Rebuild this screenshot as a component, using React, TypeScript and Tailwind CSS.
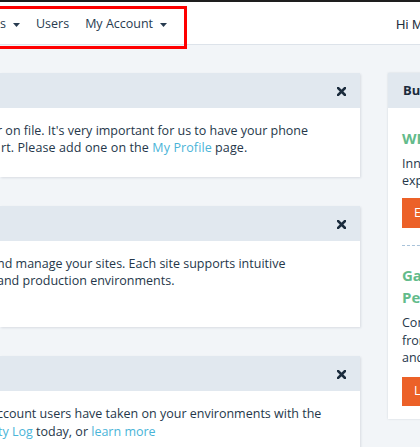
function Caret() {
  return (
    <svg width="7" height="4" viewBox="0 0 7 4" className="ml-[7px] mt-[1px]">
      <path d="M0 0 H7 L3.5 4 Z" fill="currentColor" />
    </svg>
  )
}

function CloseIcon() {
  return (
    <svg width="9" height="9" viewBox="0 0 9 9" className="mt-[1px] text-[#1b2c3d]">
      <path d="M1 1 L8 8 M8 1 L1 8" stroke="currentColor" strokeWidth="2.6" strokeLinecap="square" />
    </svg>
  )
}

function Panel({ children, bodyClass }: { children: React.ReactNode; bodyClass: string }) {
  return (
    <div className="bg-white shadow-[1px_1px_2px_rgba(40,60,80,0.12)]">
      <div className="flex h-[35px] items-center justify-end bg-[#e1e8ef] pr-[14px]">
        <CloseIcon />
      </div>
      <div className={bodyClass}>{children}</div>
    </div>
  )
}

const link = 'text-[#4ab4d8]'

export default function App() {
  return (
    <div
      className="relative h-[447px] w-[420px] overflow-hidden bg-[#f2f5f8] text-[12.5px] text-[#25374a]"
      style={{ fontFamily: '"Open Sans", sans-serif' }}
    >
      {/* top nav */}
      <div className="border-t-2 border-[#1e1e1e] bg-white">
        <div className="flex h-[43px] items-center whitespace-nowrap border-b border-[#dde3ea] pt-[3px] text-[#283b50]">
          <span className="flex items-center">
            s<Caret />
          </span>
          <span className="ml-[16px]">Users</span>
          <span className="ml-[16px] flex items-center">
            My Account<Caret />
          </span>
          <span
            className="ml-[229px] text-[13px] text-[#1f2f40]"
            style={{ fontFamily: '"Liberation Sans", Arial, sans-serif' }}
          >
            Hi Michael
          </span>
        </div>
      </div>

      {/* annotation box */}
      <div className="absolute left-[-10px] top-[6px] h-[43px] w-[197px] border-[3px] border-[#ff0000]" />

      <div className="mt-[28px] flex gap-[28px]">
        {/* main column */}
        <div className="flex w-[360px] shrink-0 flex-col gap-[29px]">
          <Panel bodyClass="h-[69px] pt-[14px] leading-[17px] whitespace-nowrap">
            <div className="-ml-[3px]">r on file. It's very important for us to have your phone</div>
            <div className="ml-[1px] tracking-[0.1px]">
              rt. Please add one on the <span className={link}>My Profile</span> page.
            </div>
          </Panel>
          <Panel bodyClass="h-[86px] pt-[14px] leading-[17px] whitespace-nowrap">
            <div className="-ml-[3px]">nd manage your sites. Each site supports intuitive</div>
            <div className="-ml-[3px]">and production environments.</div>
          </Panel>
          <Panel bodyClass="h-[80px] pt-[14px] leading-[18px] whitespace-nowrap">
            <div className="-ml-[3px]">ccount users have taken on your environments with the</div>
            <div className="-ml-[2px]">
              <span className={link}>ty Log</span> today, or <span className={link}>learn more</span>
            </div>
          </Panel>
        </div>

        {/* sidebar */}
        <div className="w-[260px] shrink-0 self-start bg-white shadow-[0_0_2px_rgba(40,60,80,0.15)]">
          <div className="flex h-[35px] items-center bg-[#e1e8ef] pl-[15px] text-[13px] font-bold text-[#1b2b3c]">
            Business Resources
          </div>
          <div className="whitespace-nowrap px-[14px] pb-[13px] pt-[19px]">
            <div className="text-[15px] font-bold leading-[22px] text-[#63bb8b]">WP Engine Partner</div>
            <div className="mt-[6px] leading-[17px]">
              <div>Innovative solutions</div>
              <div>experienced team</div>
            </div>
            <div className="mt-[9px] flex h-[30px] w-[120px] items-center bg-[#ec6128] pl-[12px] text-white">
              Explore
            </div>
            <div className="mt-[17px] border-t border-dashed border-[#a9c3da]" />
            <div className="mt-[18px] text-[15px] font-bold leading-[22px] text-[#63bb8b]">
              <div>Gain Access to</div>
              <div>Performance Tools</div>
            </div>
            <div className="mt-[6px] leading-[17.5px]">
              <div>Connect with experts</div>
              <div>from our team</div>
              <div>and partners</div>
            </div>
            <div className="mt-[10px] flex h-[29px] w-[120px] items-center bg-[#ec6128] pl-[12px] text-white">
              Learn More
            </div>
          </div>
        </div>
      </div>
    </div>
  )
}
